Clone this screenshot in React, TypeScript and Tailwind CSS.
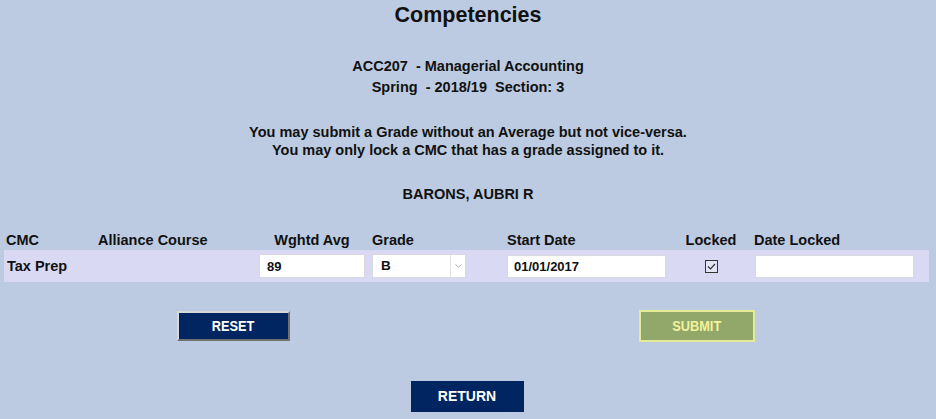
import React, { useState } from 'react';

const App = () => {
    const [avg, setAvg] = useState('89');
    const [grade, setGrade] = useState('B');
    const [startDate, setStartDate] = useState('01/01/2017');
    const [locked, setLocked] = useState(true);
    const [dateLocked, setDateLocked] = useState('');

    return (
        <div className="min-h-[419px] w-full bg-[#bccbe1] font-['Liberation_Sans',Arial,sans-serif] text-[#111] font-bold">
            <h1 className="pt-[3px] h-[27px] text-center text-[21.5px] leading-[24px] font-bold">Competencies</h1>

            <div className="mt-[29px] text-center text-[14.5px] leading-[21px]">
                <div className="whitespace-pre">ACC207  - Managerial Accounting</div>
                <div className="whitespace-pre">Spring  - 2018/19  Section: 3</div>
            </div>

            <div className="mt-[25px] text-center text-[14.5px] leading-[18px]">
                <div>You may submit a Grade without an Average but not vice-versa.</div>
                <div>You may only lock a CMC that has a grade assigned to it.</div>
            </div>

            <div className="mt-[26px] text-center text-[14.5px] leading-[18px]">BARONS, AUBRI R</div>

            {/* competency grid */}
            <div className="mt-[28px] ml-[4px] w-[925px] text-[14.5px]">
                <div className="grid grid-cols-[90px_162px_112px_135px_169px_78px_1fr] h-[19px] leading-[18px]">
                    <div className="pl-[2px]">CMC</div>
                    <div className="pl-[4px]">Alliance Course</div>
                    <div className="text-center">Wghtd Avg</div>
                    <div className="pl-[4px]">Grade</div>
                    <div className="pl-[4px]">Start Date</div>
                    <div className="text-center">Locked</div>
                    <div className="pl-[4px]">Date Locked</div>
                </div>
                <div className="grid grid-cols-[90px_162px_112px_135px_169px_78px_1fr] items-center h-[32px] bg-[#d9d9f3]">
                    <div className="pl-[3px] pt-[1px]">Tax Prep</div>
                    <div></div>
                    <div className="flex justify-center">
                        <input
                            className="w-[106px] h-[24px] bg-white border border-[#d8d8e0] px-[7px] text-[13px] font-bold outline-none"
                            value={avg}
                            onChange={(e) => setAvg(e.target.value)}
                        />
                    </div>
                    <div className="pl-[4px]">
                        <div className="relative w-[94px] h-[24px] bg-white border border-[#d8d8e0] flex">
                            <select
                                className="appearance-none w-full h-full bg-transparent pl-[8px] text-[13.5px] font-bold outline-none"
                                value={grade}
                                onChange={(e) => setGrade(e.target.value)}
                            >
                                <option>A</option>
                                <option>B</option>
                                <option>C</option>
                                <option>D</option>
                                <option>F</option>
                            </select>
                            <div className="absolute right-0 top-0 h-full w-[15px] border-l border-[#e2e2e2] flex items-center justify-center pointer-events-none">
                                <svg width="7" height="4" viewBox="0 0 7 4">
                                    <path d="M0.5 0.5 L3.5 3.2 L6.5 0.5" fill="none" stroke="#b0b0b0" strokeWidth="1" />
                                </svg>
                            </div>
                        </div>
                    </div>
                    <div className="pl-[4px]">
                        <input
                            className="w-[159px] h-[23px] bg-white border border-[#d8d8e0] px-[6px] text-[13px] font-bold outline-none"
                            value={startDate}
                            onChange={(e) => setStartDate(e.target.value)}
                        />
                    </div>
                    <div className="flex justify-center">
                        <button
                            className="w-[13px] h-[13px] border border-[#333] bg-[#e3e3f6] flex items-center justify-center"
                            onClick={() => setLocked(!locked)}
                        >
                            {locked && (
                                <svg width="11" height="11" viewBox="0 0 11 11">
                                    <path d="M2 5.5 L4.5 8 L9 3" fill="none" stroke="#333" strokeWidth="1.2" />
                                </svg>
                            )}
                        </button>
                    </div>
                    <div className="pl-[5px]">
                        <input
                            className="w-[159px] h-[23px] bg-white border border-[#d8d8e0] px-[6px] text-[13px] font-bold outline-none"
                            value={dateLocked}
                            onChange={(e) => setDateLocked(e.target.value)}
                        />
                    </div>
                </div>
            </div>

            <div className="mt-[29px] flex">
                <button className="ml-[177px] w-[113px] h-[30px] bg-[#002561] border-2 border-t-[#d8d8d8] border-l-[#d8d8d8] border-r-[#707070] border-b-[#707070] text-white text-[15px] font-bold">
                    <span className="inline-block scale-x-[0.85]">RESET</span>
                </button>
                <button className="ml-[349px] -mt-[1px] w-[116px] h-[32px] bg-[#92a86a] border-2 border-[#e4ec98] text-[#f2f29a] text-[15px] font-bold">
                    <span className="inline-block scale-x-[0.85]">SUBMIT</span>
                </button>
            </div>

            <div className="mt-[39px] flex justify-center pb-[7px]">
                <button className="-ml-[2px] w-[113px] h-[31px] bg-[#002561] text-white text-[14px] font-bold">RETURN</button>
            </div>
        </div>
    );
};

export default App;
